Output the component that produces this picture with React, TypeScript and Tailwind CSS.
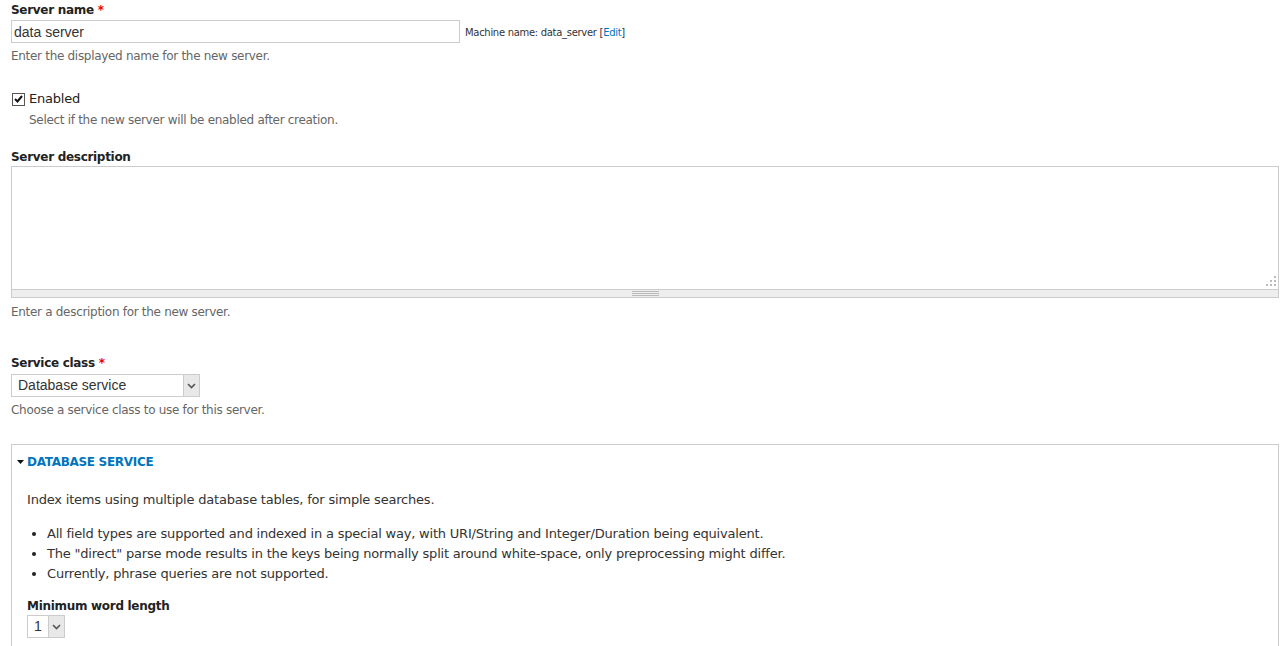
import { useState } from 'react';

const ui = "font-['Lucida_Grande','DejaVu_Sans',sans-serif]";
const label = 'block text-[12px] font-bold tracking-[-0.3px] leading-[18px] text-[#222]';
const help = 'text-[12px] tracking-[-0.3px] text-[#666] leading-[16px]';

function Req() {
  return <span className="text-[#e00]">*</span>;
}

function Select({ value, width }: { value: string; width: string }) {
  return (
    <div className={`flex h-[23px] border border-[#ccc] bg-white ${width}`}>
      <div className="flex-1 pl-[6px] flex items-center text-[14px] text-[#333] tracking-normal font-['Liberation_Sans',Arial,sans-serif]">
        {value}
      </div>
      <div className="w-[16px] border-l border-[#ccc] bg-[#e8e8e8] flex items-center justify-center">
        <svg width="9" height="6" viewBox="0 0 9 6">
          <path d="M1 1 L4.5 4.5 L8 1" stroke="#555" strokeWidth="1.6" fill="none" />
        </svg>
      </div>
    </div>
  );
}

export default function App() {
  const [name, setName] = useState('data server');
  const [enabled, setEnabled] = useState(true);

  return (
    <div className={`${ui} bg-white text-[#333] pl-[11px] pr-px h-[646px] overflow-hidden`}>
      {/* server name */}
      <div className="pt-[1px]">
        <label className={label}>
          Server name <Req />
        </label>
        <div className="flex items-center gap-[5px] mt-[1px]">
          <input
            value={name}
            onChange={(e) => setName(e.target.value)}
            className="w-[449px] h-[23px] border border-[#ccc] px-[2px] text-[14px] text-[#333] font-['Liberation_Sans',Arial,sans-serif] outline-none"
          />
          <span className="text-[10px] tracking-[-0.3px] text-[#333] leading-none pt-[2px]">
            Machine name: data_server <span>[<a className="text-[#0074bd]">Edit</a>]</span>
          </span>
        </div>
        <p className={`${help} mt-[5px]`}>Enter the displayed name for the new server.</p>
      </div>

      {/* enabled */}
      <div className="mt-[27px]">
        <label className="flex items-center gap-[4px] text-[13px] tracking-[-0.2px] leading-[16px] text-[#222] pl-[1px]">
          <span
            onClick={() => setEnabled(!enabled)}
            className="w-[13px] h-[13px] border border-[#555] bg-white flex items-center justify-center"
          >
            {enabled && (
              <svg width="9" height="8" viewBox="0 0 9 8">
                <path d="M1 4 L3.5 6.5 L8 1" stroke="#111" strokeWidth="2" fill="none" />
              </svg>
            )}
          </span>
          Enabled
        </label>
        <p className={`${help} mt-[5px] pl-[18px]`}>Select if the new server will be enabled after creation.</p>
      </div>

      {/* description */}
      <div className="mt-[20px]">
        <label className={label}>Server description</label>
        <div className="relative">
          <textarea className="block w-full h-[123px] border border-[#ccc] border-b-0 resize-none outline-none" />
          <svg className="absolute right-[3px] bottom-[3px]" width="10" height="10" viewBox="0 0 10 10">
            <rect x="8" y="0" width="2" height="2" fill="#bbb" />
            <rect x="4" y="4" width="2" height="2" fill="#bbb" />
            <rect x="8" y="4" width="2" height="2" fill="#bbb" />
            <rect x="0" y="8" width="2" height="2" fill="#bbb" />
            <rect x="4" y="8" width="2" height="2" fill="#bbb" />
            <rect x="8" y="8" width="2" height="2" fill="#bbb" />
          </svg>
        </div>
        <div className="h-[9px] bg-[#eee] border border-[#ccc] flex items-center justify-center">
          <div className="w-[27px] h-[5px] border-t border-b border-[#bbb] flex items-center">
            <div className="w-full h-px bg-[#bbb]" />
          </div>
        </div>
        <p className={`${help} mt-[6px]`}>Enter a description for the new server.</p>
      </div>

      {/* service class */}
      <div className="mt-[34px]">
        <label className={label}>
          Service class <Req />
        </label>
        <div className="mt-[2px]">
          <Select value="Database service" width="w-[189px]" />
        </div>
        <p className={`${help} mt-[5px]`}>Choose a service class to use for this server.</p>
      </div>

      {/* fieldset */}
      <div className="mt-[26px] border border-[#ccc] border-b-0 pb-[20px]">
        <div className="flex items-center gap-[3px] pl-[5px] pt-[5px] h-[28px]">
          <svg width="7" height="4" viewBox="0 0 7 4">
            <path d="M0 0 L7 0 L3.5 4 Z" fill="#111" />
          </svg>
          <span className="text-[12px] tracking-[-0.3px] font-bold uppercase text-[#0074bd] leading-none">Database service</span>
        </div>
        <div className="pl-[15px] pt-[18px]">
          <p className="text-[13px] tracking-[-0.2px] leading-[18px] text-[#333]">
            Index items using multiple database tables, for simple searches.
          </p>
          <ul className="mt-[15px] pl-[20px] list-disc text-[13px] tracking-[-0.2px] leading-[20px] text-[#333] marker:text-[#222]">
            <li>All field types are supported and indexed in a special way, with URI/String and Integer/Duration being equivalent.</li>
            <li>The "direct" parse mode results in the keys being normally split around white-space, only preprocessing might differ.</li>
            <li>Currently, phrase queries are not supported.</li>
          </ul>
          <label className={`${label} mt-[13px] leading-[17px]`}>Minimum word length</label>
          <Select value="1" width="w-[38px]" />
        </div>
      </div>
    </div>
  );
}
